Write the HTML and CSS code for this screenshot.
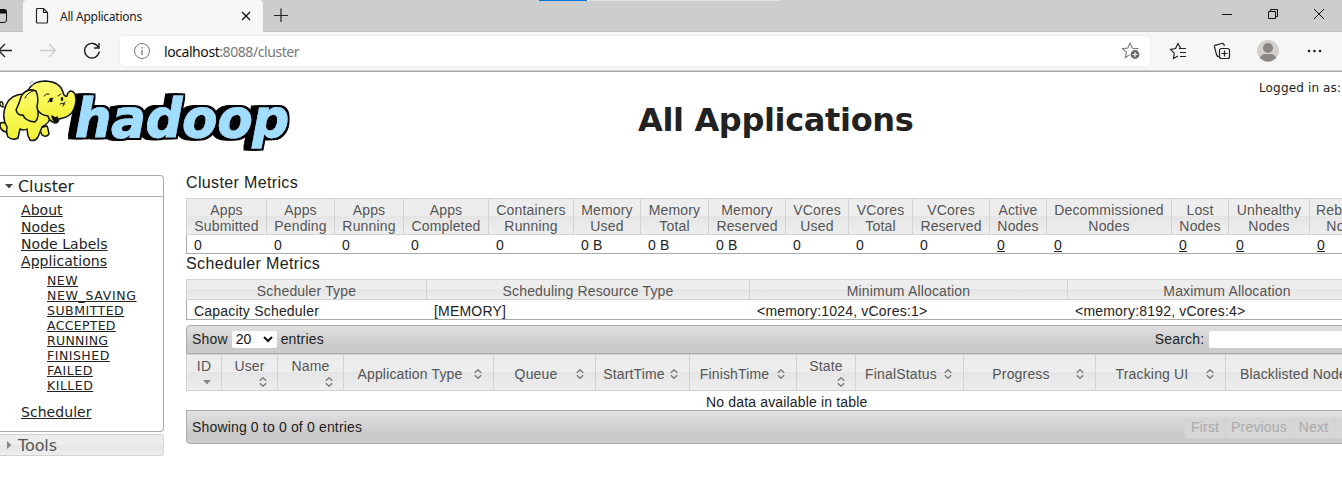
FILE: index.html
```
<!DOCTYPE html>
<html lang="en">
<head>
<meta charset="utf-8">
<title>All Applications</title>
<link rel="stylesheet" href="styles.css">
</head>
<body>
<header class="browser">
  <div class="tabstrip">
    <span class="load-track"><span class="load-fill"></span></span>
    <svg class="tab-menu" width="23" height="32" fill="none" stroke="#111"><rect x="-6.5" y="9.500" width="13" height="13" rx="2.500"/><path d="M-6 10h12v3H-6z" fill="#111"/></svg>
    <div class="tab">
      <svg width="14" height="18" fill="none" stroke="#222" stroke-width="1.200"><path d="M2.500 1.500h6l4 4v9.500q0 1-1 1h-9q-1 0-1-1v-12.500q0-1 1-1z"/><path d="M8.500 1.500v4h4"/></svg>
      <span class="tab-title">All Applications</span>
      <svg width="10" height="10" stroke="#111" stroke-width="1.400"><path d="M1 1l8 8M9 1l-8 8"/></svg>
    </div>
    <svg class="new-tab" width="14" height="14" stroke="#222" stroke-width="1.200"><path d="M0 7.500h14M7 .5v14"/></svg>
    <svg class="window-buttons" width="110" height="16" fill="none" stroke="#111" stroke-width="1"><path d="M0 8.500h10M92 3l10 10M102 3l-10 10"/><path d="M46.500 5.500h7v7h-7zM48.500 5.500v-2h7v7h-2"/></svg>
  </div>
  <div class="toolbar">
    <svg class="nav" width="120" height="38" fill="none" stroke="#222" stroke-width="1.300"><path d="M12 18.500H-2M5 12l-6.500 6.500L5 25"/><path d="M40 18.500h15M49 12l6.500 6.500L49 25" stroke="#ccc"/><path d="M98.500 15.500a7.300 7.300 0 1 0 .7 4M99 11v5h-5" stroke-width="1.400"/></svg>
    <div class="address">
      <svg width="18" height="18" fill="none" stroke="#777"><circle cx="9" cy="9" r="7.500"/><path d="M9 8v5M9 5v1.500" stroke-width="1.300"/></svg>
      <span class="url">localhost<span class="path">:8088/cluster</span></span>
      <svg class="favorite" width="20" height="20" fill="none" stroke="#777" stroke-width="1.100"><path d="M16.200 8.500l.6-.7-5.300-.6L9 2 6.800 7l-5.300.6 4 3.600-1.200 5.300 4.200-2.600"/><circle cx="14" cy="13.500" r="4.400" fill="#666" stroke="none"/><path d="M14 11v5M11.500 13.500h5" stroke="#fff"/></svg>
    </div>
    <svg class="tools" width="192" height="38" fill="none" stroke="#222" stroke-width="1.200">
      <path d="M30.500 16l-2.500-4.500-2.500 5-5 .9 3.800 3.800-.8 5.300 4.500-2.500M29 16.500h7M30 20.500h6M30 24.500h6"/>
      <path d="M66.500 22.500l-2-7.500q-.4-1.500 1.200-1.900l6.300-1.600q1.500-.4 2 1l.4 1.500M69 25q-2-.5-2.500-2.500"/><rect x="69.500" y="16.500" width="10" height="10" rx="2"/><path d="M74.500 18.500v6M71.500 21.500h6"/>
      <g stroke="none"><circle cx="118" cy="19" r="11" fill="#d2d0cd"/><circle cx="118" cy="16" r="5" fill="#8b8683"/><path d="M110 26q1.500-4 5-4h6q3.500 0 5 4-8 7-16 0z" fill="#8b8683"/></g>
      <g fill="#222" stroke="none"><circle cx="159" cy="19" r="1.300"/><circle cx="164.500" cy="19" r="1.300"/><circle cx="170" cy="19" r="1.300"/></g>
    </svg>
  </div>
</header>

<main class="page">
  <div class="masthead">
    <svg class="logo" width="300" height="90" viewBox="0 0 300 90">
      <defs>
        <linearGradient id="skin" x1="0" y1="0" x2="0" y2="1"><stop offset="0" stop-color="#ffff78"/><stop offset="1" stop-color="#f0f030"/></linearGradient>
        <filter id="depth" x="-10%" y="-10%" width="120%" height="130%">
          <feMorphology in="SourceAlpha" operator="dilate" radius="1.500 1.500" result="edge"/>
          <feOffset in="edge" dx="-3" result="a"/><feOffset in="edge" dx="-6" result="b"/>
          <feMerge><feMergeNode in="b"/><feMergeNode in="a"/><feMergeNode in="edge"/><feMergeNode in="SourceGraphic"/></feMerge>
        </filter>
      </defs>
      <text class="wordmark" x="75" y="67" textLength="214" lengthAdjust="spacingAndGlyphs" filter="url(#depth)">hadoop</text>
      <g fill="url(#skin)" stroke="#111" stroke-width="1.500" stroke-linejoin="round" stroke-linecap="round">
        <path d="M4 37Q-1 37 0 32q3-1 3 3M5 53q-5-2-5 3 1 5 6 6"/>
        <path d="M39 58l3 7q4 3 7-1-1-6-2-8z"/>
        <path d="M24 24Q11 24 6 35 1 47 7 57q-1 6 1 10 5 4 10 1l2-9q4 2 7 0 0 6 3 11 5 2 8-3l4-10q8-4 9-12l-10-23z"/>
        <path d="M27 23Q31 11 46 11q14 1 17 11 1 5 4 4 0-3 3-5 6 0 6 9-1 15-13 18l-4 1q-1 4-4 4-6-2-7-7-9-1-12-9z"/>
        <path d="M36 21q-10-4-15 6-2 7-5 13 2 6 7 5 2 6 12 7 5-5 2-15 2-10-1-16z"/>
        <path d="M25 28q2-5 8-7M44 26q2-3 5-2M48 32q2-4 5-4M58 26l3-2M60 34q2-2 5 0M63 36q0-3 2-4" fill="none" stroke-width="1"/>
        <path d="M52 46q4 3 5 1 2 3 0 5-4 0-5-6z" fill="#111"/>
        <ellipse cx="51" cy="30" rx="1.700" ry="2.200" fill="#111" stroke="none"/><ellipse cx="62" cy="29" rx="1.300" ry="2" fill="#111" stroke="none"/>
        <path d="M30 14q0-3 3-3M32 15l2-3" fill="none" stroke="#aaa" stroke-width="1"/>
      </g>
    </svg>
    <h1>All Applications</h1>
    <span class="login">Logged in as:</span>
  </div>

  <div class="columns">
    <nav class="sidebar">
      <div class="group-head"><svg width="8" height="5"><path d="M0 0h8l-4 4.500z" fill="#444"/></svg>Cluster</div>
      <div class="group-body">
        <a>About</a><a>Nodes</a><a>Node Labels</a><a>Applications</a>
        <div class="states"><a>NEW</a><a>NEW_SAVING</a><a>SUBMITTED</a><a>ACCEPTED</a><a>RUNNING</a><a>FINISHED</a><a>FAILED</a><a>KILLED</a></div>
        <a>Scheduler</a>
      </div>
      <div class="group-closed"><svg width="5" height="8"><path d="M0 0v8l4.500-4z" fill="#888"/></svg>Tools</div>
    </nav>

    <section class="content">
      <h2>Cluster Metrics</h2>
      <div class="grid cluster">
        <div class="th">Apps<br>Submitted</div><div class="th">Apps<br>Pending</div><div class="th">Apps<br>Running</div><div class="th">Apps<br>Completed</div><div class="th">Containers<br>Running</div><div class="th">Memory<br>Used</div><div class="th">Memory<br>Total</div><div class="th">Memory<br>Reserved</div><div class="th">VCores<br>Used</div><div class="th">VCores<br>Total</div><div class="th">VCores<br>Reserved</div><div class="th">Active<br>Nodes</div><div class="th">Decommissioned<br>Nodes</div><div class="th">Lost<br>Nodes</div><div class="th">Unhealthy<br>Nodes</div><div class="th">Rebooted<br>Nodes</div>
        <div class="td">0</div><div class="td">0</div><div class="td">0</div><div class="td">0</div><div class="td">0</div><div class="td">0 B</div><div class="td">0 B</div><div class="td">0 B</div><div class="td">0</div><div class="td">0</div><div class="td">0</div><div class="td"><a>0</a></div><div class="td"><a>0</a></div><div class="td"><a>0</a></div><div class="td"><a>0</a></div><div class="td"><a>0</a></div>
      </div>
      <h2 class="second">Scheduler Metrics</h2>
      <div class="grid scheduler">
        <div class="th">Scheduler Type</div><div class="th">Scheduling Resource Type</div><div class="th">Minimum Allocation</div><div class="th">Maximum Allocation</div>
        <div class="td">Capacity Scheduler</div><div class="td">[MEMORY]</div><div class="td">&lt;memory:1024, vCores:1&gt;</div><div class="td">&lt;memory:8192, vCores:4&gt;</div>
      </div>

      <svg class="sprite" width="0" height="0"><symbol id="sort" viewBox="0 0 8 10"><path d="M.8 3.700L4 .8l3.200 2.900M.8 6.300L4 9.200l3.200-2.900" fill="none" stroke="#777" stroke-width="1.400"/></symbol></svg>
      <div class="bar top">
        <span>Show</span>
        <span class="select">20<svg width="10" height="7" fill="none" stroke="#111" stroke-width="2"><path d="M1 1l4 4 4-4"/></svg></span>
        <span>entries</span>
        <span class="search">Search:</span><span class="input"></span>
      </div>
      <div class="grid apps">
        <div class="th tall">ID<svg width="8" height="5"><path d="M0 0h8l-4 4.500z" fill="#888"/></svg></div>
        <div class="th tall">User<svg width="8" height="10"><use href="#sort"/></svg></div>
        <div class="th tall">Name<svg width="8" height="10"><use href="#sort"/></svg></div>
        <div class="th wide"><span>Application Type</span><svg width="8" height="10"><use href="#sort"/></svg></div>
        <div class="th wide"><span>Queue</span><svg width="8" height="10"><use href="#sort"/></svg></div>
        <div class="th wide"><span>StartTime</span><svg width="8" height="10"><use href="#sort"/></svg></div>
        <div class="th wide"><span>FinishTime</span><svg width="8" height="10"><use href="#sort"/></svg></div>
        <div class="th tall">State<svg width="8" height="10"><use href="#sort"/></svg></div>
        <div class="th wide"><span>FinalStatus</span><svg width="8" height="10"><use href="#sort"/></svg></div>
        <div class="th wide"><span>Progress</span><svg width="8" height="10"><use href="#sort"/></svg></div>
        <div class="th wide"><span>Tracking UI</span><svg width="8" height="10"><use href="#sort"/></svg></div>
        <div class="th wide"><span>Blacklisted Nodes</span><svg width="8" height="10"><use href="#sort"/></svg></div>
      </div>
      <div class="empty">No data available in table</div>
      <div class="bar bottom"><span>Showing 0 to 0 of 0 entries</span>
        <div class="pager"><span>First</span><span>Previous</span><span>Next</span><span></span></div>
      </div>
    </section>
  </div>
</main>
</body>
</html>
```
FILE: styles.css
```
* { box-sizing: border-box; }
html, body { margin: 0; height: 487px; overflow: hidden; background: #fff; }
body { color: #222; font-family: "Liberation Sans", Arial, sans-serif; font-size: 14px; }
svg { display: block; flex: none; }
.sprite { position: absolute; }
a { color: #222; text-decoration: underline; }

.browser { font-family: "Noto Sans", sans-serif; height: 72px; background: #f6f6f6; border-bottom: 1px solid #a5a5a5; box-shadow: inset 0 -1px #d0d0d0; }
.tabstrip { display: flex; align-items: flex-start; height: 32px; background: #cdcdcd; box-shadow: inset 0 -1px #bebebe; position: relative; }
.load-track { position: absolute; left: 539px; top: 0; width: 241px; height: 1px; background: #e4e4e4; }
.load-fill { display: block; width: 48px; height: 1px; background: #0078d7; }
.tab { display: flex; align-items: center; width: 240px; height: 32px; padding: 0 12px; background: #f7f7f7; border-radius: 4px 4px 0 0; }
.tab-title { flex: 1; padding-left: 11px; font-size: 12px; letter-spacing: -.25px; color: #222; }
.new-tab { margin: 8px 0 0 11px; }
.window-buttons { margin: 6px 10px 0 auto; }
.toolbar { display: flex; height: 38px; }
.address { display: flex; align-items: center; width: 1030px; height: 30px; margin-top: 4px; padding: 0 9px 0 13px; background: #fff; border-radius: 4px; box-shadow: 0 0 3px #e4e4e4; }
.url { flex: 1; padding-left: 13px; font-size: 14px; letter-spacing: -.43px; color: #111; }
.path { color: #777; }

.page { width: 1342px; overflow: hidden; }
.masthead { display: flex; height: 103px; }
.logo { margin-top: -2px; }
.wordmark { font: italic bold 54px "DejaVu Sans", sans-serif; fill: #a1ddff; stroke: #a1ddff; stroke-width: 1px; }
h1 { margin: 29px 0 0 338px; width: 621px; font: bold 32px/39px "DejaVu Sans", Verdana, sans-serif; letter-spacing: -.35px; }
.login { margin-top: 8px; font: 12px/16px "DejaVu Sans", Verdana, sans-serif; letter-spacing: .15px; white-space: nowrap; }

.columns { display: flex; }
.sidebar { flex: none; width: 164px; font-family: "DejaVu Sans", Verdana, sans-serif; }
.group-head, .group-closed { display: flex; align-items: center; height: 22px; border: 1px solid #aaa; border-left: 0; font-size: 16px; letter-spacing: -.1px; }
.group-head { gap: 5px; padding-left: 5px; border-radius: 0 4px 0 0; }
.group-body { display: flex; flex-direction: column; align-items: flex-start; height: 235px; padding: 5px 0 0 21px; border: 1px solid #aaa; border-width: 0 1px 1px 0; border-radius: 0 0 4px; font-size: 14px; line-height: 17px; letter-spacing: .05px; }
.states { display: flex; flex-direction: column; align-items: flex-start; margin: 3px 0 11px 26px; font-size: 12.500px; line-height: 15px; letter-spacing: .5px; }
.states a:nth-child(2) { letter-spacing: .65px; }
.states a:nth-child(4), .states a:nth-child(5) { letter-spacing: .3px; }
.group-closed { gap: 6px; margin-top: 2px; padding-left: 7px; border-color: #d3d3d3; border-radius: 0 4px 4px 0; color: #555; background: linear-gradient(#ededed 50%, #e5e5e5 50%, #eee); }

.content { flex: none; width: 1314px; margin-left: 22px; }
h2 { height: 23px; margin: 0; font-weight: normal; font-size: 16px; line-height: 15px; letter-spacing: .36px; }
.second { height: 25px; line-height: 19px; }
.grid { display: grid; overflow: hidden; }
.cluster { grid-template-columns: 80px 68px 69px 85px 85px 67px 68px 77px 63px 64px 77px 57px 125px 57px 81px 75px; grid-template-rows: 37px 19px; }
.scheduler { grid-template-columns: 240px 323px 318px 433px; grid-template-rows: 21px 20px; }
.apps { grid-template-columns: 35px 56px 66px 150px 102px 94px 107px 59px 108px 132px 130px 160px; grid-template-rows: 37px; }
.th { border: 1px solid #d3d3d3; border-right: 0; color: #555; background: linear-gradient(#ededed 50%, #e5e5e5 50%, #eee); text-align: center; line-height: 16px; letter-spacing: .16px; white-space: nowrap; }
.cluster .th, .scheduler .th { padding-top: 3px; }
.td { padding-left: 8px; border-bottom: 1px solid #aaa; line-height: 21px; letter-spacing: .2px; }
.scheduler .td { line-height: 22px; }
.cluster .td:nth-child(17), .scheduler .td:nth-child(5) { padding-left: 7px; border-left: 1px solid #aaa; }
.scheduler .th:nth-child(4) { padding-right: 114px; }
.tall { display: flex; flex-direction: column; align-items: center; padding-top: 3px; }
.tall svg { margin: 3px 10px 0 auto; }
.tall:first-child svg { margin-top: 6px; }
.wide { display: flex; align-items: center; padding-top: 2px; padding-right: 11px; }
.wide span { flex: 1; padding-left: 2px; }
.bar { display: flex; align-items: center; border: 1px solid #aaa; background: linear-gradient(#e1e1e1, #c9c9c9 75%, #cdcdcd); padding-left: 5px; letter-spacing: .16px; }
.top { height: 29px; margin-top: 5px; padding-bottom: 1px; border-radius: 4px 4px 0 0; gap: 4px; }
.select { display: flex; align-items: center; justify-content: space-between; width: 45px; height: 17px; padding: 0 4px; background: #fff; border-radius: 2px; color: #111; }
.search { width: 50px; margin-left: 827px; }
.input { width: 155px; height: 17px; background: #fff; border-radius: 2px; }
.empty { width: 1201px; height: 19px; line-height: 22px; padding-left: 520px; letter-spacing: .16px; }
.bottom { height: 34px; border-radius: 0 0 4px 4px; }
.pager { display: flex; margin-left: 822px; color: #aaa; }
.pager span { height: 21px; padding: 0 6px 0 5px; line-height: 19px; border: 1px solid #cfcfcf; border-color: #d9d9d9 #cfcfcf; border-width: 1px 0 1px 1px; background: #d6d6d6; }
.pager span:first-child { border-radius: 4px 0 0 4px; padding-left: 6px; }
```
